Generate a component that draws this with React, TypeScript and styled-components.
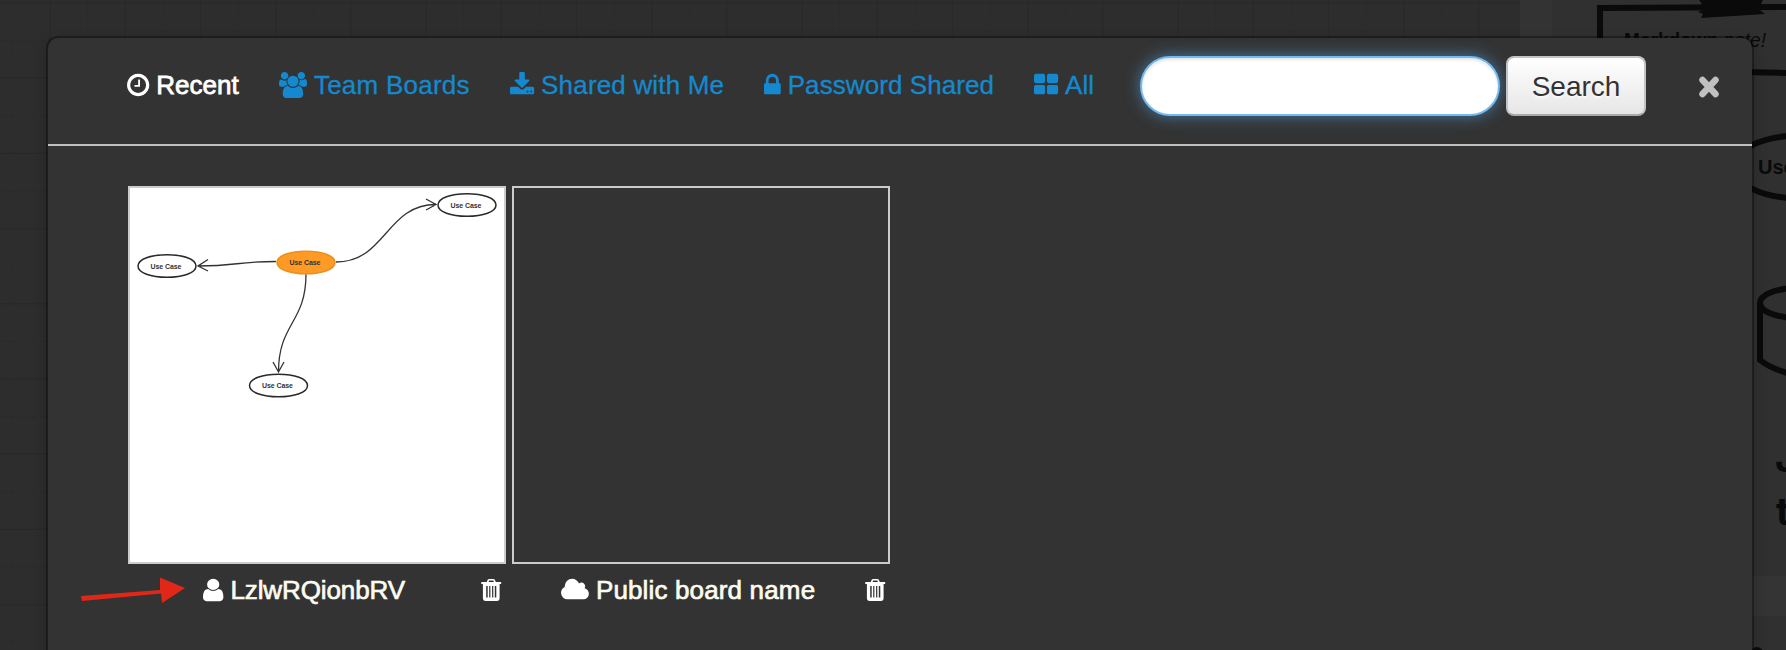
import React from 'react';
import styled, { createGlobalStyle } from 'styled-components';

const GlobalStyle = createGlobalStyle`
  * { box-sizing: border-box; }
  html, body { margin: 0; padding: 0; }
  body { font-family: "Liberation Sans", Arial, sans-serif; font-size: 26px; background: #2d2d2d; overflow: hidden; }
`;

const Page = styled.div`
  position: relative;
  width: 1786px;
  height: 650px;
  overflow: hidden;
  padding: 36px 32px 0 46px;
`;

const Backdrop = styled.svg`
  position: absolute;
  inset: 0;
`;

const Modal = styled.section`
  position: relative;
  height: 660px;
  background: #333;
  background-clip: padding-box;
  border: 2px solid rgba(0, 0, 0, 0.35);
  border-radius: 12px;
  box-shadow: 0 6px 14px rgba(0, 0, 0, 0.2);
`;

const Header = styled.header`
  display: flex;
  align-items: flex-start;
  height: 108px;
  padding: 18px 32px 0 79px;
  border-bottom: 2px solid #c0c0c0;
`;

const Tabs = styled.nav`
  display: flex;
  width: 1013px;
  padding-top: 12px;
`;

const Tab = styled.a<{ $active?: boolean; $width: number; $tracking: number }>`
  display: flex;
  align-items: center;
  gap: 7px;
  flex: none;
  width: ${p => p.$width}px;
  height: 34px;
  color: ${p => (p.$active ? '#fff' : '#1589cf')};
  letter-spacing: ${p => p.$tracking}px;
  -webkit-text-stroke: ${p => (p.$active ? '0.8px #fff' : '0.3px #1589cf')};
  white-space: nowrap;
  text-decoration: none;
`;

const Glyph = styled.svg<{ $heavy?: boolean }>`
  flex: none;
  height: 26px;
  fill: currentColor;
  stroke: ${p => (p.$heavy ? 'currentColor' : 'none')};
  stroke-width: 48px;
  overflow: visible;
`;

const SearchInput = styled.input`
  width: 360px;
  height: 60px;
  padding: 0 28px;
  font: inherit;
  background: #fff;
  border: 2px solid #74b9f0;
  border-radius: 30px;
  outline: none;
  box-shadow: inset 0 2px 3px rgba(0, 0, 0, 0.1), 0 0 16px rgba(82, 168, 236, 0.6);
`;

const SearchButton = styled.button`
  width: 140px;
  height: 60px;
  margin-left: 6px;
  padding: 2px 0 0;
  font: inherit;
  font-size: 28px;
  color: #333;
  text-shadow: 0 2px 2px rgba(255, 255, 255, 0.75);
  background: linear-gradient(#fff, #e6e6e6);
  border: 2px solid #c4c4c4;
  border-bottom-color: #aaa;
  border-radius: 8px;
`;

const CloseButton = styled.button`
  display: flex;
  margin: 19px 0 0 auto;
  padding: 0;
  color: #c0c0c0;
  background: none;
  border: 0;
`;

const Boards = styled.div`
  display: flex;
  gap: 6px;
  padding: 40px 80px;
`;

const Board = styled.article`
  width: 378px;
`;

const Thumb = styled.div<{ $filled?: boolean }>`
  height: 378px;
  border: 2px solid #ccc;
  background: ${p => (p.$filled ? '#fff' : 'transparent')};
`;

const Diagram = styled.svg`
  display: block;
`;

const Caption = styled.div<{ $indent: number }>`
  display: flex;
  align-items: center;
  height: 52px;
  padding: 0 5px 0 ${p => p.$indent}px;
  color: #fff;
`;

const BoardName = styled.span<{ $tracking: number }>`
  flex: 1;
  margin-left: 7px;
  color: #fbfbf0;
  letter-spacing: ${p => p.$tracking}px;
  white-space: nowrap;
  -webkit-text-stroke: 0.7px #fbfbf0;
`;

const Pointer = styled.svg`
  position: absolute;
  left: 80px;
  top: 574px;
`;

type IconName = 'clock' | 'users' | 'download' | 'lock' | 'grid' | 'user' | 'cloud' | 'trash';

const icons: Record<IconName, { box: string; width: number; d: string; heavy?: boolean }> = {
  clock: {
    box: '128 0 1536 1792', width: 22.3,
    d: 'M1024 544v448q0 14-9 23t-23 9h-320q-14 0-23-9t-9-23v-64q0-14 9-23t23-9h224v-352q0-14 9-23t23-9h64q14 0 23 9t9 23zm416 352q0-148-73-273t-198-198-273-73-273 73-198 198-73 273 73 273 198 198 273 73 273-73 198-198 73-273zm224 0q0 209-103 385.5t-279.5 279.5-385.5 103-385.5-103-279.5-279.5-103-385.5 103-385.5 279.5-279.5 385.5-103 385.5 103 279.5 279.5 103 385.5z',
  },
  users: {
    box: '0 0 1920 1792', width: 27.9,
    d: 'M593 896q-162 5-265 128h-134q-82 0-138-40.5t-56-118.5q0-353 124-353 6 0 43.5 21t97.5 42.5 119 21.5q67 0 133-23-5 37-5 66 0 159 93 290zm1071 637q0 120-73 189.5t-194 69.5h-874q-121 0-194-69.5t-73-189.5q0-53 3.5-103.5t14-109 26.5-108.5 43-97.5 62-81 85.5-53.5 111.5-20q10 0 43 21.5t73 48 107 48 135 21.5 135-21.5 107-48 73-48 43-21.5q61 0 111.5 20t85.5 53.5 62 81 43 97.5 26.5 108.5 14 109 3.5 103.5zm-1024-1277q0 106-75 181t-181 75-181-75-75-181 75-181 181-75 181 75 75 181zm704 384q0 159-112.5 271.5t-271.5 112.5-271.5-112.5-112.5-271.5 112.5-271.5 271.5-112.5 271.5 112.5 112.5 271.5zm576 225q0 78-56 118.5t-138 40.5h-134q-103-123-265-128 93-131 93-290 0-29-5-66 66 23 133 23 59 0 119-21.5t97.5-42.5 43.5-21q124 0 124 353zm-128-609q0 106-75 181t-181 75-181-75-75-181 75-181 181-75 181 75 75 181z',
  },
  download: {
    box: '64 0 1664 1792', width: 24.1,
    d: 'M1344 1344q0-26-19-45t-45-19-45 19-19 45 19 45 45 19 45-19 19-45zm256 0q0-26-19-45t-45-19-45 19-19 45 19 45 45 19 45-19 19-45zm128-224v320q0 40-28 68t-68 28h-1472q-40 0-68-28t-28-68v-320q0-40 28-68t68-28h465l135 136q58 56 136 56t136-56l136-136h464q40 0 68 28t28 68zm-325-569q17 41-14 70l-448 448q-18 19-45 19t-45-19l-448-448q-31-29-14-70 17-39 59-39h256v-448q0-26 19-45t45-19h256q26 0 45 19t19 45v448h256q42 0 59 39z',
  },
  lock: {
    box: '320 0 1152 1792', width: 16.7,
    d: 'M640 768h512v-192q0-106-75-181t-181-75-181 75-75 181v192zm832 96v576q0 40-28 68t-68 28h-960q-40 0-68-28t-28-68v-576q0-40 28-68t68-28h32v-192q0-184 132-316t316-132 316 132 132 316v192h32q40 0 68 28t28 68z',
  },
  grid: {
    box: '64 0 1664 1792', width: 24.1,
    d: 'M832 1024v384q0 52-38 90t-90 38h-512q-52 0-90-38t-38-90v-384q0-52 38-90t90-38h512q52 0 90 38t38 90zm0-768v384q0 52-38 90t-90 38h-512q-52 0-90-38t-38-90v-384q0-52 38-90t90-38h512q52 0 90 38t38 90zm896 768v384q0 52-38 90t-90 38h-512q-52 0-90-38t-38-90v-384q0-52 38-90t90-38h512q52 0 90 38t38 90zm0-768v384q0 52-38 90t-90 38h-512q-52 0-90-38t-38-90v-384q0-52 38-90t90-38h512q52 0 90 38t38 90z',
  },
  user: {
    box: '256 0 1280 1792', width: 20.4,
    d: 'M1536 1399q0 109-62.5 187t-150.5 78h-854q-88 0-150.5-78t-62.5-187q0-85 8.5-160.5t31.5-152 58.5-131 94-89 134.5-34.5q131 128 313 128t313-128q76 0 134.5 34.5t94 89 58.5 131 31.5 152 8.5 160.5zm-256-887q0 159-112.5 271.5t-271.5 112.5-271.5-112.5-112.5-271.5 112.5-271.5 271.5-112.5 271.5 112.5 112.5 271.5z',
  },
  cloud: {
    box: '64 0 1920 1792', width: 27.9,
    d: 'M1984 1152q0 159-112.5 271.5t-271.5 112.5h-1088q-185 0-316.5-131.5t-131.5-316.5q0-132 71-241.5t187-163.5q-2-28-2-43 0-212 150-362t362-150q158 0 286.5 88t187.5 230q70-62 166-62 106 0 181 75t75 181q0 75-41 138 129 30 213 134.5t84 239.5z',
  },
  trash: {
    box: '192 0 1408 1792', width: 20.4, heavy: true,
    d: 'M704 736v576q0 14-9 23t-23 9h-64q-14 0-23-9t-9-23v-576q0-14 9-23t23-9h64q14 0 23 9t9 23zm256 0v576q0 14-9 23t-23 9h-64q-14 0-23-9t-9-23v-576q0-14 9-23t23-9h64q14 0 23 9t9 23zm256 0v576q0 14-9 23t-23 9h-64q-14 0-23-9t-9-23v-576q0-14 9-23t23-9h64q14 0 23 9t9 23zm128 680v-860h-896v860q0 22 7 30t14.5 20 10.5 6h832q3 0 10.5-6t14.5-20 7-30zm-672-1032h448l-48-117q-7-9-17-11h-317q-10 2-17 11zm928 32v64q0 14-9 23t-23 9h-96v948q0 83-47 143.5t-113 60.5h-832q-66 0-113-58.5t-47-141.5v-952h-96q-14 0-23-9t-9-23v-64q0-14 9-23t23-9h309l70-167q15-37 54-63t79-26h320q40 0 79 26t54 63l70 167h309q14 0 23 9t9 23z',
  },
};

const Icon = ({ name }: { name: IconName }) => (
  <Glyph
    viewBox={icons[name].box}
    width={icons[name].width}
    height="26"
    preserveAspectRatio="none"
    $heavy={icons[name].heavy}
  >
    <path d={icons[name].d} fillRule={icons[name].heavy ? 'evenodd' : undefined} />
  </Glyph>
);

const TrashIcon = () => (
  <Glyph viewBox="0 0 20.4 26" width="20.4" height="26">
    <path
      fillRule="evenodd"
      d="M.7 5h5l1-2.3Q7.2 1.9 8.3 1.9h3.9q1.100 0 1.600.8l1 2.300h4.900q.5 0 .5.5v1q0 .5-.5.5H18.600v14.600q0 2.400-2.300 2.400H4.200q-2.300 0-2.300-2.400V7H.7Q.2 7 .2 6.500v-1Q.2 5 .7 5zM7.500 5h5.500l-.7-1.500H8.200zM5.200 9v11.500h1.500V9zM8.200 9v11.500h1.200V9zM11.100 9v11.500h1.200V9zM13.800 9v11.500h1.500V9z"
    />
  </Glyph>
);

const tabs: { icon: IconName; label: string; width: number; tracking: number; active?: boolean }[] = [
  { icon: 'clock', label: 'Recent', width: 152, tracking: 0, active: true },
  { icon: 'users', label: 'Team Boards', width: 231, tracking: 0.25 },
  { icon: 'download', label: 'Shared with Me', width: 254, tracking: 0.18 },
  { icon: 'lock', label: 'Password Shared', width: 270, tracking: 0.08 },
  { icon: 'grid', label: 'All', width: 60, tracking: 0 },
];

const columns = Array.from({ length: 41 }, (_, i) => 12.5 + i * 37.6);
const rows = Array.from({ length: 18 }, (_, i) => 3 + i * 37.6);

const Canvas = () => (
  <Backdrop width="1786" height="650">
    <g strokeWidth="1">
      {columns.map((x, i) => (
        <line key={x} x1={x} x2={x} y1="0" y2="650" stroke={i % 2 ? '#292929' : '#2b2b2b'} strokeDasharray={i % 2 ? undefined : '6 4'} />
      ))}
      {rows.map((y, i) => (
        <line key={y} x1="0" x2="1520" y1={y} y2={y} stroke={i % 2 ? '#2b2b2b' : '#292929'} strokeDasharray={i % 2 ? '6 4' : undefined} />
      ))}
    </g>
    <rect x="1520" width="32" height="650" fill="#333" />
    <rect x="1552" width="234" height="650" fill="#303030" />
    <rect x="1740" y="576" width="46" height="40" fill="#343434" />
    <g fill="none" stroke="#0a0a0a" strokeWidth="6">
      <path d="M1600 60V8L1786 7M1740 72L1786 73" />
      <ellipse cx="1796" cy="167" rx="62" ry="31" />
      <path d="M1760 303V360Q1774 371 1800 376M1800 288C1775 288 1760 295 1760 303S1775 318 1800 318" />
    </g>
    <path d="M1699 0h64l-2 4 3 3-4 3 5 4-64 4 2-4-5-2 4-2-4-4 4-2z" fill="#0a0a0a" />
    <g fill="#0a0a0a">
      <text x="1624" y="47" fontSize="20" fontStyle="italic" textLength="142" lengthAdjust="spacingAndGlyphs">
        <tspan fontWeight="700" fontStyle="normal">Markdown</tspan> note!
      </text>
      <text x="1758" y="174" fontSize="20" fontWeight="700">Use Case</text>
      <g fontFamily="Inter, sans-serif" fontSize="38" fontWeight="700">
        <text x="1775" y="472">J</text>
        <text x="1776" y="525">t</text>
      </g>
      <circle cx="1757" cy="653" r="6" />
    </g>
  </Backdrop>
);

const nodes = [
  { x: 337, y: 17 },
  { x: 37, y: 78 },
  { x: 176, y: 74.5, highlight: true },
  { x: 148.5, y: 197.500 },
];

const UseCaseDiagram = () => (
  <Diagram width="374" height="374">
    <g fill="none" stroke="#333" strokeWidth="1.3">
      <path d="M206 74C256 74 256 16.500 306 16.500M296 11L306 16.500L296 22" />
      <path d="M146 73.500C107 73.500 107 78 68 78M78 71.500L68 78L78 83" />
      <path d="M176 86C176 135 148.500 135 148.500 184M143 174L148.500 184L154 174" />
    </g>
    {nodes.map(n => (
      <g key={n.x}>
        <path
          transform={`translate(${n.x} ${n.y})`}
          d="M-29 0C-29-7-16-11.300 0-11.300S29-7 29 0 16 11.300 0 11.300-29 7-29 0Z"
          fill={n.highlight ? '#ff9a26' : '#fff'}
          stroke={n.highlight ? '#e8921d' : '#2a2a2a'}
          strokeWidth="1.5"
        />
        <text x={n.x - 1} y={n.y + 2.500} fontSize="7" fontWeight="700" textAnchor="middle" fill="#333" textLength="31">Use Case</text>
      </g>
    ))}
  </Diagram>
);

const App = () => (
  <>
    <GlobalStyle />
    <Page>
      <Canvas />
      <Modal>
        <Header>
          <Tabs>
            {tabs.map(t => (
              <Tab key={t.label} $active={t.active} $width={t.width} $tracking={t.tracking}>
                <Icon name={t.icon} />
                {t.label}
              </Tab>
            ))}
          </Tabs>
          <SearchInput aria-label="Search boards" />
          <SearchButton>Search</SearchButton>
          <CloseButton aria-label="Close">
            <svg width="22" height="24" viewBox="0 0 22 24">
              <path d="M4.500 5L17.500 19M17.500 5L4.500 19" stroke="currentColor" strokeWidth="6.500" strokeLinecap="round" />
            </svg>
          </CloseButton>
        </Header>
        <Boards>
          <Board>
            <Thumb $filled><UseCaseDiagram /></Thumb>
            <Caption $indent={75}>
              <Icon name="user" />
              <BoardName $tracking={-0.1}>LzlwRQionbRV</BoardName>
              <TrashIcon />
            </Caption>
          </Board>
          <Board>
            <Thumb />
            <Caption $indent={49}>
              <Icon name="cloud" />
              <BoardName $tracking={0.15}>Public board name</BoardName>
              <TrashIcon />
            </Caption>
          </Board>
        </Boards>
      </Modal>
      <Pointer width="106" height="32">
        <path d="M1 22L80 16V3.500L105 14L82 29L81 19.500L2 27Z" fill="#e12717" />
      </Pointer>
    </Page>
  </>
);

export default App;
